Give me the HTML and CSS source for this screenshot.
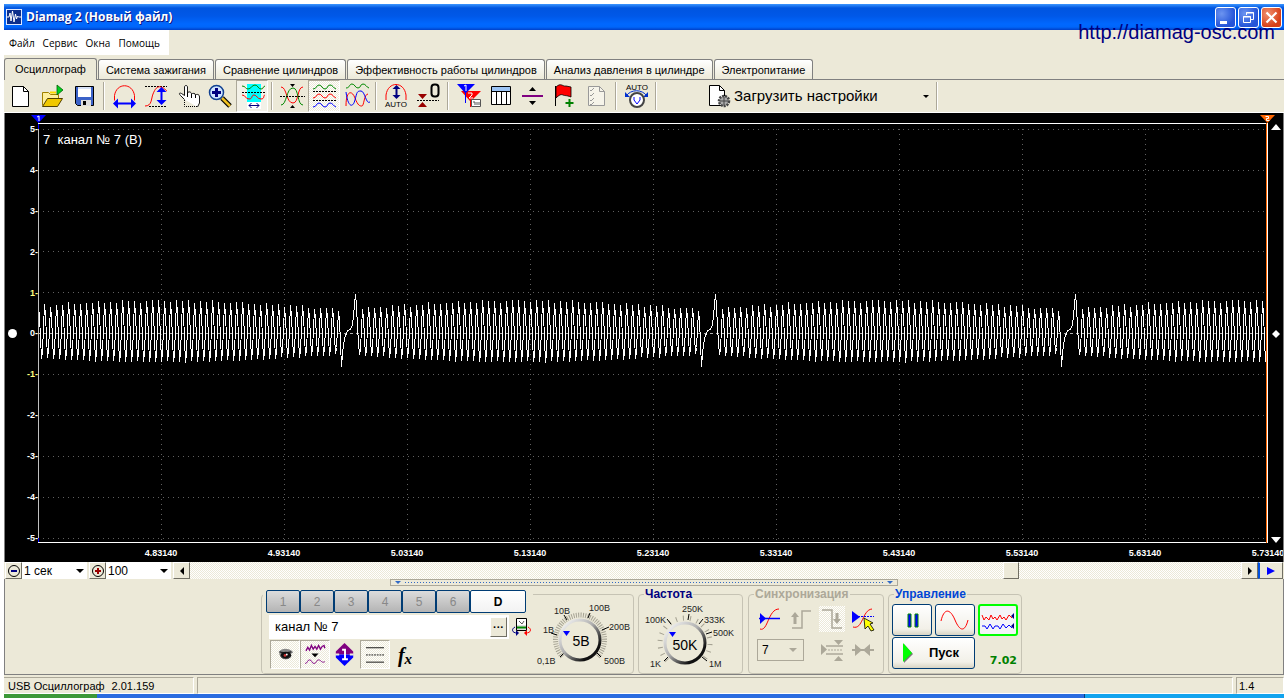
FILE: index.html
```
<!DOCTYPE html>
<html lang="ru">
<head>
<meta charset="utf-8">
<title>Diamag 2 (Новый файл)</title>
<link rel="stylesheet" href="styles.css">
</head>
<body>
<div class="window">
  <header class="titlebar">
    <svg class="app-icon" width="16" height="16" viewBox="0 0 16 16"><rect width="16" height="16" fill="#dfe8ff"/><rect x="1" y="1" width="14" height="14" fill="#0c2f8c"/><path d="M1 8h2l1-4 1 8 1.500-10 1.500 11 1.500-8 1 5 1-3 1 1h3" fill="none" stroke="#fff"/></svg>
    <h1 class="title">Diamag 2 (Новый файл)</h1>
    <button class="win-btn" aria-label="Свернуть"><svg width="19" height="19" viewBox="0 0 19 19"><path d="M4 13h7v3H4z" fill="#fff"/></svg></button>
    <button class="win-btn" aria-label="Восстановить"><svg width="19" height="19" viewBox="0 0 19 19"><path d="M7.500 7V4.500h7v7H12M7 5h8M4.500 8.500h7v6h-7zM4 9h8" fill="none" stroke="#fff"/></svg></button>
    <button class="win-btn win-close" aria-label="Закрыть"><svg width="19" height="19" viewBox="0 0 19 19"><path d="M4.500 4.500l10 10M14.500 4.500l-10 10" stroke="#fff" stroke-width="2.200"/></svg></button>
    <a class="site" href="#">http://diamag-osc.com</a>
  </header>

  <nav class="menubar">
    <button>Файл</button><button>Сервис</button><button>Окна</button><button>Помощь</button>
  </nav>

  <div class="tabs" role="tablist">
    <button class="tab active" role="tab" aria-selected="true">Осциллограф</button>
    <button class="tab" role="tab">Система зажигания</button>
    <button class="tab" role="tab">Сравнение цилиндров</button>
    <button class="tab" role="tab">Эффективность работы цилиндров</button>
    <button class="tab" role="tab">Анализ давления в цилиндре</button>
    <button class="tab" role="tab">Электропитание</button>
  </div>

  <div class="toolbar">
    <button class="tool" aria-label="Новый"><svg viewBox="0 0 32 32"><path d="M8.500 6.500h11l5 5v15h-16z" fill="#fff" stroke="#000"/><path d="M19.500 6.500v5h5" fill="none" stroke="#000"/></svg></button>
    <button class="tool" aria-label="Открыть"><svg viewBox="0 0 32 32"><path d="M6.500 25.500v-13h6l2 2h8v5" fill="#ffef9c" stroke="#a08000"/><path d="M6.500 26.500l5-8h15l-5 8z" fill="#f0c800" stroke="#504000"/><path d="M14 12.500h6" fill="none" stroke="#ffd800" stroke-width="2"/><path d="M21 5l6 5-6 5z" fill="#00d020" stroke="#006000" stroke-width=".8"/></svg></button>
    <button class="tool" aria-label="Сохранить"><svg viewBox="0 0 32 32"><path d="M7.500 6.500h18v19h-16l-2-2z" fill="#3b62c8" stroke="#000"/><path d="M10 7h13v10H10z" fill="#fff"/><path d="M10 8h13" stroke="#b0c4ee"/><path d="M13 20h10v6H13z" fill="#ddd"/><path d="M15 21h3v4h-3z" fill="#000"/></svg></button>
    <span class="sep"></span>
    <button class="tool" aria-label="Растянуть по горизонтали"><svg viewBox="0 0 32 32"><path d="M6.500 20.500v-5c2-13 18-13 20 0v5" fill="none" stroke="#f00"/><path d="M5 23.500l5-5v4h13v-4l5 5-5 5v-4H10v4z" fill="#00f"/></svg></button>
    <button class="tool" aria-label="Растянуть по вертикали"><svg viewBox="0 0 32 32"><path d="M5 6.500h22M9 26.500h18" stroke="#000" stroke-dasharray="2 1"/><path d="M5 26c7 0 6-7 8-12s4-8 8-7 4 3 6 4" fill="none" stroke="#f00"/><path d="M21.500 7l5 5h-4v8h4l-5 5-5-5h4v-8h-4z" fill="#00f"/></svg></button>
    <button class="tool" aria-label="Перемещение"><svg viewBox="0 0 32 32"><path d="M12.500 19.500l-4-4c-2-2-1-3 1-2l3 2V7c0-2 3-2 3 0v6c1-2 4-1 4 1 1-1 4-1 4 1 1-1 4-1 4 2v6l-2 4" fill="#fff" stroke="#000" stroke-width=".9"/><path d="M12.500 20v6.500h13" fill="none" stroke="#000" stroke-dasharray="1 1"/><path d="M15.500 13v4M19.500 14v4M23.500 15v3" stroke="#000"/></svg></button>
    <button class="tool" aria-label="Увеличить"><svg viewBox="0 0 32 32"><path d="M18 18l8 8" stroke="#000" stroke-width="5"/><path d="M18 18l8 8" stroke="#f0c020" stroke-width="2.500"/><circle cx="12.500" cy="12.500" r="7" fill="#cfe4ff" stroke="#104090" stroke-width="1.500"/><path d="M12.500 8v9M8 12.500h9" stroke="#000080" stroke-width="3"/></svg></button>
    <button class="tool pressed pale" aria-label="Интервал"><svg viewBox="0 0 32 32"><path d="M11 4h14v18H11z" fill="#0ff"/><path d="M11 22h14v7H11z" fill="#fff"/><path d="M6 6c4 0 3 3 6 3s4-4 7-4 3 4 6 4 1-2 4-3" fill="none" stroke="#080"/><path d="M6 12.500h24" stroke="#000" stroke-dasharray="2 1"/><path d="M6 15c4 0 3 4 7 4s2-4 5-4 3 4 7 4 2-4 4-4" fill="none" stroke="#f00"/><path d="M13 25.500h10M15.500 23l-2.500 2.500 2.500 2.500M20.500 23l2.500 2.500-2.500 2.500" fill="none" stroke="#000080"/></svg></button>
    <span class="sep"></span>
    <button class="tool" aria-label="Наложение"><svg viewBox="0 0 32 32"><path d="M5 7c6 0 5 16 12 16 6 0 4-16 10-16" fill="none" stroke="#f00"/><path d="M5 25c6 0 5-17 12-17 6 0 4 17 10 17" fill="none" stroke="#080"/><path d="M4 16.500h25" stroke="#000" stroke-dasharray="2 1"/><path d="M14 4h5l-2.500 3zM14 28h5l-2.500-3z" fill="#000"/></svg></button>
    <button class="tool pressed light" aria-label="Раздельно"><svg viewBox="0 0 32 32"><g fill="none"><path d="M5 9c4 0 3-4 6-4s3 4 6 4 2-4 5-4 3 3 6 4" stroke="#080"/><path d="M5 18c4 0 3-4 6-4s3 4 6 4 2-4 5-4 3 3 6 4" stroke="#f00"/><path d="M5 27c4 0 3-4 6-4s3 4 6 4 2-4 5-4 3 3 6 4" stroke="#00f"/><path d="M5 11.500h24M5 20.500h24" stroke="#000" stroke-dasharray="2 1"/></g></svg></button>
    <button class="tool" aria-label="Совместно"><svg viewBox="0 0 32 32"><g fill="none"><path d="M6 8c4 0 3-4 6-4s3 4 6 4 2-4 5-4 3 3 6 4" stroke="#080"/><path d="M6 26c0-16 6-16 9-8s5 8 7 8 2-12 6-12" stroke="#f00"/><path d="M6 12c2 16 7 16 9 8s2-9 6-9 5 14 9 11" stroke="#00f"/></g></svg></button>
    <span class="sep"></span>
    <button class="tool" aria-label="Автомасштаб"><svg viewBox="0 0 32 32"><path d="M6 20v-5C8 1 24 1 26 15v5" fill="none" stroke="#f00"/><path d="M16.500 5l4 4h-3v6h3l-4 4-4-4h3V9h-3z" fill="#000080"/><text x="5" y="27" class="icon-text">AUTO</text></svg></button>
    <button class="tool" aria-label="Установка нуля"><svg viewBox="0 0 32 32"><path d="M6 14h9l-4.500 5zM6 27h9l-4.500-5z" fill="#900"/><path d="M5 20.500h22" stroke="#000" stroke-dasharray="2 1"/><rect x="19.500" y="4.500" width="7" height="12" rx="3" fill="none" stroke="#000" stroke-width="2"/></svg></button>
    <span class="sep"></span>
    <button class="tool" aria-label="Маркеры"><svg viewBox="0 0 32 32"><path d="M9 11h20l-10 10v6h-1v-6z" fill="#f00"/><path d="M5 4h18l-9 9v10h-1V13z" fill="#00f"/><path d="M12 6l2-1v6" fill="none" stroke="#fff"/><path d="M16 13h4v2l-3 3h4" fill="none" stroke="#fff"/><path d="M19.500 19.500h9v7h-9z" fill="#fff" stroke="#555"/><path d="M21 22h2v3M25 22v3M27 22v3" stroke="#555" fill="none"/></svg></button>
    <button class="tool" aria-label="Таблица"><svg viewBox="0 0 32 32"><path d="M7.500 6.500h19v18h-19z" fill="#fff" stroke="#000"/><path d="M8 7h18v4H8z" fill="#9cc4f4"/><path d="M7 11.500h20M12.500 11v13M17.500 11v13M22.500 11v13" stroke="#000"/></svg></button>
    <button class="tool" aria-label="Разделитель"><svg viewBox="0 0 32 32"><path d="M6 16h21" stroke="#800080" stroke-width="2"/><path d="M13 11h7l-3.500-4zM13 21h7l-3.500 4z" fill="#000"/></svg></button>
    <button class="tool" aria-label="Добавить флажок"><svg viewBox="0 0 32 32"><path d="M7.500 6v20" stroke="#000"/><path d="M8 7c5-5 7 0 10-1l5 1v10c-5-2-6-1-8-2s-4 0-7 3z" fill="#f00" stroke="#000" stroke-width=".8"/><path d="M21.500 19v8M17.500 23h8" stroke="#008000" stroke-width="2"/></svg></button>
    <button class="tool" aria-label="Отчёт" disabled><svg viewBox="0 0 32 32"><path d="M8.500 6.500h11l5 5v14h-16z" fill="#f6f4ea" stroke="#999"/><path d="M19.500 6.500v5h5" fill="none" stroke="#999"/><path d="M10 10l1 1 3-3M10 15l1 1 3-3M10 20l1 1 3-3M10 24l1 1 3-3" fill="none" stroke="#999"/></svg></button>
    <span class="sep"></span>
    <button class="tool" aria-label="Авто напряжение"><svg viewBox="0 0 32 32"><text x="6" y="10" class="icon-text">AUTO</text><path d="M6 16c5-7 16-7 21 0" fill="none" stroke="#0030d0"/><path d="M5 12v5h5zM28 12v5h-5z" fill="#0030d0"/><circle cx="17" cy="20" r="7" fill="#fff" stroke="#444" stroke-width="2"/><path d="M14 17v3l3 4 3-4v-3" fill="none" stroke="#00f"/></svg></button>
    <span class="sep"></span>
    <button class="load"><svg width="24" height="26" viewBox="0 0 24 26"><path d="M1.500 2.500h10l5 5v15h-15z" fill="#fff" stroke="#000"/><path d="M11.500 2.500v5h5" fill="none" stroke="#000"/><circle cx="16" cy="18" r="5" fill="#aaa" stroke="#444" stroke-width="2.500" stroke-dasharray="2 1"/><path d="M12 18h8M16 14v8" stroke="#444"/></svg><span>Загрузить настройки</span><i class="caret"></i></button>
    <span class="sep"></span>
  </div>

  <main class="scope">
    <div class="markers">
      <svg class="marker" width="15" height="8" viewBox="0 0 15 8"><path d="M0 0h15L7.500 8z" fill="#00f"/><path d="M6 2l2-1v5" fill="none" stroke="#fff"/></svg>
      <svg class="marker" width="15" height="8" viewBox="0 0 15 8"><path d="M0 0h15L7.500 8z" fill="#f60"/><path d="M5.500 1.500h3v2h-2v2h3" fill="none" stroke="#fff"/></svg>
    </div>
    <div class="axis-y">
      <span>5-</span><span>4-</span><span>3-</span><span>2-</span><span class="yellow">1-</span><span>0-</span><span class="yellow">-1-</span><span>-2-</span><span>-3-</span><span>-4-</span><span>-5-</span>
      <i class="zero-dot"></i>
    </div>
    <div class="plot">
      <svg class="plot-svg" viewBox="0 0 1230 420" preserveAspectRatio="none">
        <g class="grid">
          <path d="M0 6.500H1230M0 47.500H1230M0 88.500H1230M0 128.500H1230M0 169.500H1230M0 251.500H1230M0 292.500H1230M0 333.500H1230M0 374.500H1230M0 415.500H1230"/>
          <path d="M123.500 6V420M246.500 6V420M369.500 6V420M492.500 6V420M615.500 6V420M738.500 6V420M861.500 6V420M984.500 6V420M1107.500 6V420"/>
        </g>
        <path class="zero" d="M0 210.500H1230"/>
        <path class="wave" id="wave"/>
        <path d="M.5 0V420" stroke="#c0c0c0"/><path d="M.5 0V6M.5 415V420" stroke="#00f"/>
        <path d="M0 .5H1230M0 419.500H1230" stroke="#fff"/>
        <path d="M1228.500 0V420" stroke="#f60"/><path d="M1229.500 0V420" stroke="#fff"/>
      </svg>
      <span class="channel-label">7&nbsp; канал № 7 (В)</span>
    </div>
    <div class="handles">
      <svg width="10" height="6" viewBox="0 0 10 6"><path d="M0 6h10L5 0z" fill="#fff"/></svg>
      <svg width="8" height="8" viewBox="0 0 8 8"><path d="M4 0l4 4-4 4-4-4z" fill="#fff"/></svg>
      <svg width="10" height="6" viewBox="0 0 10 6"><path d="M0 0h10L5 6z" fill="#fff"/></svg>
    </div>
    <div class="axis-x">
      <span>4.83140</span><span>4.93140</span><span>5.03140</span><span>5.13140</span><span>5.23140</span><span>5.33140</span><span>5.43140</span><span>5.53140</span><span>5.63140</span><span>5.73140</span>
    </div>
  </main>

  <div class="timebar">
    <button class="small-btn" aria-label="Уменьшить"><svg width="14" height="14" viewBox="0 0 14 14"><circle cx="7" cy="7" r="5.500" fill="none" stroke="#000"/><path d="M4 7h6" stroke="#000080" stroke-width="2"/></svg></button>
    <label class="combo"><select aria-label="Развёртка"><option>1 сек</option></select><i class="caret"></i></label>
    <button class="small-btn" aria-label="Увеличить масштаб"><svg width="14" height="14" viewBox="0 0 14 14"><circle cx="7" cy="7" r="5.500" fill="none" stroke="#000"/><path d="M4 7h6M7 4v6" stroke="#900" stroke-width="2"/></svg></button>
    <label class="combo"><select aria-label="Масштаб"><option>100</option></select><i class="caret"></i></label>
    <button class="small-btn" aria-label="Назад"><svg width="8" height="8" viewBox="0 0 8 8"><path d="M6 0v8L2 4z"/></svg></button>
    <div class="track"><i class="before"></i><button class="thumb" aria-label="Позиция"></button><i class="after"></i></div>
    <button class="small-btn" aria-label="Вперёд"><svg width="8" height="8" viewBox="0 0 8 8"><path d="M2 0v8l4-4z"/></svg></button>
    <button class="small-btn play" aria-label="Прокрутка"><svg width="8" height="8" viewBox="0 0 8 8"><path d="M0 0v8l8-4z" fill="#00f"/></svg></button>
  </div>

  <section class="panel">
    <div class="splitter"><i></i><span></span><i></i></div>
    <div class="groups">
      <fieldset class="group channels">
        <div class="channel-box">
          <div class="channel-tabs"><button disabled>1</button><button disabled>2</button><button disabled>3</button><button disabled>4</button><button disabled>5</button><button disabled>6</button><button class="current">D</button></div>
          <div class="name-row">
            <div class="name-field"><input type="text" value="канал № 7" aria-label="Имя канала"><button class="more" aria-label="Выбрать">···</button></div>
            <svg width="20" height="20" viewBox="0 0 20 20"><path d="M4.500 1.500h10v12h-10z" fill="#ddd" stroke="#000"/><path d="M5 2h9v6H5z" fill="#fff"/><path d="M5 10.500h9" stroke="#080" stroke-width="2"/><path d="M7 4l3 3 2-3" fill="none" stroke="#555"/><path d="M3 10c-4 2-3 6 2 6" fill="none" stroke="#000080"/><path d="M4 13l3 3-3 3z" fill="#000080"/><path d="M16 10c4 2 3 6-2 6" fill="none" stroke="#f00"/><path d="M15 13l-3 3 3 3z" fill="#f00"/></svg>
          </div>
          <div class="channel-tools">
            <button class="pressed light" aria-label="Видимость"><svg viewBox="0 0 30 30"><path d="M8 12c4-5 10-4 15-1l1 2-4 2H10z" fill="#888"/><path d="M9 12c3 2 8 1 13 0" stroke="#222" stroke-width="1.500" fill="none"/><ellipse cx="16" cy="16" rx="6" ry="4" fill="#111"/><path d="M9 14l2 4c4 3 8 2 10-1" fill="none" stroke="#555"/><circle cx="15" cy="16" r="1.500" fill="#c33"/><circle cx="17" cy="15" r="1" fill="#fff"/></svg></button>
            <button class="pressed light" aria-label="Сглаживание"><svg viewBox="0 0 30 30"><path d="M5 11l2-4 2 3 2-5 2 4 2-3 2 3 2-4 2 4 2-3 2-1 1 3" fill="none" stroke="#800080" stroke-width="1.500"/><path d="M11 14h8l-4 4z" fill="#000"/><path d="M4 25c3 0 2-4 5-4s2 4 5 4 2-4 5-4 3 4 7 2" fill="none" stroke="#800080"/></svg></button>
            <button aria-label="Смещение"><svg viewBox="0 0 30 30"><path d="M14.500 3l9 9v3h-18v-3z" fill="#800080"/><path d="M14.500 27l9-9v-3h-18v3z" fill="#00f"/><path d="M12 10h3v10M12 20h6" stroke="#fff" stroke-width="2" fill="none"/><path d="M5 15h4M20 15h4" stroke="#ece9d8" stroke-width="2"/></svg></button>
            <button class="pressed light" aria-label="Фильтр"><svg viewBox="0 0 30 30"><path d="M5 7.500h20M5 23.500h20" stroke="#000"/><path d="M5 15.500h20" stroke="#000" stroke-dasharray="2 1"/></svg></button>
            <button class="fx" aria-label="Функция"><span>f</span><sub>x</sub></button>
          </div>
        </div>
        <svg class="dial" width="100" height="78" viewBox="0 0 100 78">
          <defs><linearGradient id="rim" x1="0" y1="0" x2="1" y2="1"><stop offset="0" stop-color="#fff"/><stop offset=".45" stop-color="#b0b0b0"/><stop offset=".8" stop-color="#111"/></linearGradient></defs>
          <path d="M29.400 61.600A24.500 24.500 0 1 1 64.600 61.600" fill="none" stroke="#a5a293" stroke-width="5" stroke-dasharray="1 1.300"/>
          <path d="M31 58l-4 4M24 40l-6-2M34 25l-3-5M55 23l2-5M69 35l7-3M64 58l4 4" stroke="#000"/>
          <circle cx="47" cy="45" r="20" fill="#ece9d8" stroke="url(#rim)" stroke-width="3"/>
          <path d="M30 36h7l-3.500 5z" fill="#00f"/>
          <text x="48" y="51" class="dial-value">5В</text>
          <g class="dial-text"><text x="21" y="19">10В</text><text x="56" y="16">100В</text><text x="10" y="38">1В</text><text x="76" y="35">200В</text><text x="4" y="69">0,1В</text><text x="71" y="69">500В</text></g>
        </svg>
      </fieldset>
      <fieldset class="group freq">
        <legend>Частота</legend>
        <svg class="dial" width="100" height="78" viewBox="0 0 100 78">
          <path d="M28 65.400A25 25 0 1 1 64 65.400" fill="none" stroke="#a5a293" stroke-width="5" stroke-dasharray="1 6"/>
          <path d="M29 62l-4 4M32 29l-4-5M49 25l1-6M60 29l4-5M67 39l6-2M63 62l5 4" stroke="#000"/>
          <circle cx="46" cy="48" r="20" fill="#ece9d8" stroke="url(#rim)" stroke-width="3"/>
          <path d="M30 37h7l-3.500 5z" fill="#00f"/>
          <text x="46" y="55" class="dial-value">50K</text>
          <g class="dial-text"><text x="6" y="28">100K</text><text x="43" y="17">250K</text><text x="65" y="28">333K</text><text x="74" y="41">500K</text><text x="11" y="72">1K</text><text x="70" y="72">1M</text></g>
        </svg>
      </fieldset>
      <fieldset class="group sync">
        <legend>Синхронизация</legend>
        <div class="sync-grid">
          <button aria-label="Уровень"><svg viewBox="0 0 26 26"><path d="M3 23c8 3 8-20 19-20" fill="none" stroke="#f00"/><path d="M2 12.500h21" stroke="#00f" stroke-width="1.500"/><path d="M3 7v11l6-5.500z" fill="#00f"/></svg></button>
          <button aria-label="Фронт" disabled><svg viewBox="0 0 26 26"><path d="M4 22h10V5h9" fill="none" stroke="#aca899" stroke-width="1.500"/><path d="M3 11l4-5 4 5H8.500v7h-3v-7z" fill="#aca899"/></svg></button>
          <button class="light" aria-label="Спад" disabled><svg viewBox="0 0 26 26"><path d="M3 4h10v18h10" fill="none" stroke="#aca899" stroke-width="1.500"/><path d="M14 13l4 5 4-5h-2.500V7h-3v6z" fill="#aca899"/></svg></button>
          <button aria-label="Выбор уровня"><svg viewBox="0 0 26 26"><path d="M3 21c10 3 9-17 19-18" fill="none" stroke="#f00"/><path d="M2 10.500h22" stroke="#00f" stroke-dasharray="2 1"/><path d="M2 5v12l8-6z" fill="#00f"/><path d="M14 12l9 5-3 1 4 6-3 1-3-5-3 3z" fill="#ff0" stroke="#000" stroke-width=".8"/></svg></button>
          <label class="sync-select"><select aria-label="Канал синхронизации"><option>7</option></select><i class="caret"></i></label>
          <button aria-label="Порог" disabled><svg viewBox="0 0 26 26"><path d="M2 7v11l6-5.500zM15 3h9l-4.500 5zM15 24h9l-4.500-5z" fill="#aca899"/><path d="M7 9h17M7 17h17" stroke="#aca899" stroke-width="1.500"/><path d="M9 13h15" stroke="#aca899" stroke-dasharray="2 1"/></svg></button>
          <button aria-label="Задержка" disabled><svg viewBox="0 0 26 26"><path d="M5 7l7 6-7 6zM20 7l-7 6 7 6z" fill="#aca899"/><path d="M2 13h22" stroke="#aca899" stroke-width="2"/></svg></button>
        </div>
      </fieldset>
      <fieldset class="group control">
        <legend>Управление</legend>
        <div class="control-grid">
          <button class="xp" aria-label="Пауза"><svg width="30" height="28" viewBox="0 0 30 28"><path d="M11 8h3v13h-3zM18 8h3v13h-3z" fill="#00f" stroke="#080"/></svg></button>
          <button class="xp" aria-label="Один сигнал"><svg width="30" height="28" viewBox="0 0 30 28"><path d="M1 15C4 2 10 2 15 14s10 12 13 0" fill="none" stroke="#f00"/></svg></button>
          <button class="xp selected" aria-label="Запись"><svg width="34" height="28" viewBox="0 0 34 28"><path d="M1 9l2 5 2-3 3 3 2-5 2 4 2-2 2 3 3-5 2 4 2-2 2 3 3-5 3 3" fill="none" stroke="#f00"/><path d="M1 20h3l2 3 3-5 3 5 2-3h3l2 3 3-5 3 4 3-3 3 3" fill="none" stroke="#00f"/><path d="M33 7v6l-3-3zM33 17v6l-3-3z" fill="#000080"/></svg></button>
          <button class="xp start"><svg width="12" height="20" viewBox="0 0 12 20"><path d="M2 1v19l9-9z" fill="#777"/><path d="M1 0v19l9-9z" fill="#0f0"/></svg><span>Пуск</span></button>
          <output class="counter">7.02</output>
        </div>
      </fieldset>
    </div>
  </section>

  <footer class="status"><div class="cell first"><span>USB Осциллограф</span><span>2.01.159</span></div><div class="cell wide"></div><div class="cell last">1.4</div></footer>
  <div class="taskbar"><i class="start-edge"></i><i class="mid-edge"></i><i class="tray-edge"></i></div>
</div>
<script src="wave.js"></script>
</body>
</html>
```

FILE: styles.css
```
* { box-sizing: border-box; }
body { margin: 0; background: #fff; color: #000; font: 11px/14px "Liberation Sans", Arial, sans-serif; }
button, input, select { font: inherit; color: inherit; margin: 0; padding: 0; }
button { border: 0; background: none; }
svg { display: block; flex: none; }
.window { display: flex; flex-direction: column; min-height: 100vh; padding: 4px 4px 0; }
.window > * { background-color: #ece9d8; }

.titlebar { position: relative; display: flex; align-items: center; gap: 2px; height: 26px; padding: 0 2px; background: linear-gradient(#3c96ff 0, #0055e0 4px, #0058e8 12px, #0068ff 20px, #0066fa 23px, #0040c8 26px); }
.title { flex: 1; margin: 0 0 0 2px; color: #fff; font: bold 12px/20px "Open Sans", "Noto Sans", sans-serif; text-shadow: 1px 1px #0a1883; }
.win-btn { width: 21px; height: 21px; border: 1px solid #fff; border-radius: 3px; background: radial-gradient(at 30% 30%, #6c94f0, #2454d8 70%); }
.win-close { background: radial-gradient(at 30% 30%, #f09070, #d84018 70%); }
.site { position: absolute; right: 9px; top: 16px; color: #000080; font-size: 20px; line-height: 24px; text-decoration: none; }

.menubar { display: flex; align-items: center; height: 25px; }
.menubar button { height: 25px; padding: 0 4px; background: #fff; font: 10px/14px "Open Sans", sans-serif; }
.menubar button:first-child { padding-left: 5px; }
.menubar button:last-child { padding-right: 9px; }

.tabs { display: flex; align-items: flex-end; gap: 1px; height: 25px; border-bottom: 1px solid #808080; }
.tab { height: 20px; padding: 0 7px; border: solid #808080; border-width: 1px 1px 0; border-radius: 3px 3px 0 0; background: linear-gradient(#fff, #ece9d8); font-size: 11px; white-space: nowrap; }
.tab.active { height: 22px; margin-bottom: -1px; padding: 0 10px 1px; background: #ece9d8; }

.toolbar { display: flex; align-items: center; height: 33px; border-bottom: 1px solid #fff; }
.tool { width: 32px; height: 32px; flex: none; }
.tool svg, .channel-tools svg { width: 100%; height: 100%; }
.pressed { border: 1px solid; border-color: #aca899 #fff #fff #aca899; }
.pale { background: #f3f1e8; }
.tool.pressed svg { margin: -1px; width: 32px; height: 32px; }
.light, .track { background: repeating-conic-gradient(#fff 0 25%, #ece9d8 0 50%) 0 0 / 2px 2px; }
.sep { width: 2px; height: 28px; margin: 0 3px; border-left: 1px solid #aca899; border-right: 1px solid #fff; }
.icon-text { font-size: 8px; }
.load { display: flex; align-items: center; gap: 2px; width: 229px; margin-left: 44px; padding: 0 4px; font-size: 15px; }
.caret { width: 0; height: 0; border: 4px solid transparent; border-top-color: #000; border-bottom: 0; }
.load .caret { border-width: 3px 3px 0; margin-left: auto; }

.window > .scope { flex: 1; display: grid; grid-template: 10px minmax(200px, 1fr) 19px / 33px minmax(0, 1fr) 15px; border: solid #808080; border-width: 0 1px; background: #000; color: #fff; overflow: hidden; }
.markers { grid-column: 2; display: flex; justify-content: space-between; margin: 2px -7px 0; }
.markers, .handles { z-index: 1; }
.axis-y { grid-area: 2 / 1; position: relative; display: flex; flex-direction: column; justify-content: space-between; margin-bottom: -1px; text-align: right; font: bold 9px/12px "Liberation Sans", Arial, sans-serif; }
.yellow { color: #ffff80; }
.zero-dot { position: absolute; left: 3px; top: calc(50% - 5px); width: 9px; height: 9px; border-radius: 50%; background: #fff; }
.plot { grid-area: 2 / 2; position: relative; min-height: 0; }
.plot-svg { position: absolute; width: 100%; height: 100%; overflow: visible; shape-rendering: crispEdges; }
.grid path { stroke: #606060; stroke-dasharray: 1 4; }
.zero { stroke: #b0b0b0; stroke-dasharray: 3 3; }
.wave { fill: none; stroke: #fff; vector-effect: non-scaling-stroke; }
.channel-label { position: absolute; left: 5px; top: 9px; font-size: 13px; line-height: 16px; }
.handles { grid-area: 2 / 3; display: flex; flex-direction: column; align-items: center; justify-content: space-between; padding-left: 1px; padding-top: 1px; }
.axis-x { grid-area: 3 / 2; display: grid; grid-template-columns: repeat(10, 1fr); margin: 0 -5% 0 5%; font: bold 9px/20px "Liberation Sans", Arial, sans-serif; text-align: center; }

.timebar { display: flex; height: 17px; padding-left: 1px; padding-right: 1px; }
.small-btn, .thumb, .more { display: flex; align-items: center; justify-content: center; width: 17px; flex: none; background: #ece9d8; border: 1px solid; border-color: #fff #716f64 #716f64 #fff; }
.play { width: 25px; border-left: 2px solid #0050e0; }
.combo { display: flex; align-items: center; width: 67px; padding-right: 3px; background: #fff; border-right: 2px solid #ece9d8; }
.combo select, .sync-select select { flex: 1; min-width: 0; padding-left: 2px; appearance: none; border: 0; background: none; font-size: 12px; line-height: 16px; }
.track { flex: 1; display: flex; }
.track .before { flex: 814; }
.track .after { flex: 222; }
.thumb { width: 16px; }

.panel { border: solid #808080; border-width: 0 1px 1px; }
.splitter { display: flex; align-items: center; gap: 4px; width: 508px; max-width: 100%; height: 7px; margin: 0 auto; padding: 0 4px; border: 1px solid #aca899; }
.splitter i { border: 3px solid transparent; border-top-color: #316ac5; border-bottom: 0; }
.splitter span { flex: 1; height: 1px; background: repeating-linear-gradient(90deg, #316ac5 0 1px, transparent 1px 3px); }
.groups { display: flex; justify-content: center; gap: 4px; padding-right: 5px; }
.group { min-width: 0; margin: 2px 0 0; padding: 0; border: 1px solid #c6c3b4; border-radius: 4px; }
.group legend { margin-left: 5px; padding: 0 1px; font: bold 12px/13px "Liberation Sans", Arial, sans-serif; color: #000080; }
.channels { display: flex; width: 373px; margin-top: 8px; }
.channel-box { width: 270px; margin: -5px 0 0 1px; padding-left: 3px; background: #ece9d8; }
.channel-tabs { display: flex; }
.channel-tabs button { width: 34px; height: 23px; border: 1px solid #003c74; border-radius: 2px; background: linear-gradient(#dcdcdc, #b4b4b4); color: #888; font-size: 12px; }
.channel-tabs .current { width: 56px; background: linear-gradient(#fff, #f2f2f2); color: #000; font-weight: bold; }
.name-row { display: flex; align-items: center; gap: 3px; margin: 2px 0 1px 3px; }
.name-field { display: flex; width: 240px; height: 24px; padding: 2px; background: #fff; }
.name-field input { flex: 1; min-width: 0; padding-left: 4px; border: 0; background: none; font-size: 13px; }
.more { font-weight: bold; }
.channel-tools { display: flex; margin-left: 4px; }
.channel-tools button { width: 30px; height: 29px; }
.fx { font: italic bold 20px/20px "Liberation Serif", serif; }
.fx sub { font-size: 15px; line-height: 0; vertical-align: -2px; }
.dial { font-family: "Liberation Sans", Arial, sans-serif; }
.dial-text { font-size: 9px; fill: #222; }
.dial-value { font-size: 14px; text-anchor: middle; }
.freq { width: 105px; }
.freq .dial { margin-top: -6px; }
.sync { width: 136px; margin-left: 1px; }
.sync legend { color: #aca899; }
.sync-grid { display: grid; grid-template-columns: repeat(4, 26px); gap: 5px; padding: 5px 8px 4px; }
.sync-grid button { width: 26px; height: 26px; }
.sync-select { grid-column: span 2; display: flex; align-items: center; width: 47px; height: 22px; margin-top: 2px; padding-right: 6px; border: 1px solid #aca899; }
.sync-select .caret { border-top-color: #aca899; }
.sync-select select { padding-left: 4px; }
.control { width: 134px; }
.control legend { color: #0046d5; }
.control-grid { display: grid; grid-template-columns: repeat(3, 40px); gap: 1px 3px; padding: 3px 3px 2px; }
.xp { display: flex; align-items: center; justify-content: center; height: 32px; border: 1px solid #003c74; border-radius: 3px; background: linear-gradient(#fff, #f2f0e8 80%, #d8d4c4); }
.xp.selected { border: 2px solid #0f0; background: #f4f4f8; }
.start { grid-column: span 2; justify-content: flex-start; padding-left: 9px; font: bold 13px/16px "Liberation Sans", Arial, sans-serif; }
.start span { margin: 0 auto; }
.counter { align-self: end; justify-self: end; padding: 0 1px 1px 0; color: #008000; font: bold 11px/14px "DejaVu Sans", sans-serif; }

.status { display: flex; gap: 3px; height: 19px; padding-top: 2px; }
.cell { padding: 1px 3px; border: 1px solid; border-color: #aca899 #fff #fff #aca899; white-space: nowrap; }
.first { display: flex; gap: 7px; width: 190px; border-left: 0; padding-left: 4px; }
.wide { flex: 1; }
.last { width: 48px; padding-left: 2px; }
.taskbar { display: flex; height: 4px; }
.start-edge { width: 93px; background: #3c9838; }
.mid-edge { flex: 1; background: #2a6ce0; }
.tray-edge { width: 200px; border-left: 1px solid #0a3c80; background: #12a4ee; }
```

FILE: wave.js
```
// Crankshaft signal: 60-2 teeth, one revolution every 360 units, 6 units per tooth.
(function () {
  var zero = 210, rev = 360, points = [];
  function add(x, y) {
    if (x >= 0 && x <= 1227) points.push((x + 0.5).toFixed(1) + ' ' + (zero - y).toFixed(1));
  }
  for (var start = -43; start < 1230; start += rev) {
    for (var t = 0; t < 57; t++) {
      var x = start + 4 + t * 6;
      var swell = Math.sin(Math.PI * (t + 3) / 60);
      var ripple = Math.sin(t * 1.3) + Math.sin(t * 2.9);
      var low = 21 + 8 * swell + ripple / 2;
      var high = 23 + 9 * swell + ripple;
      add(x, -low);
      add(x + 1, -low * 0.7);
      add(x + 3, high);
      add(x + 4, high * 0.6);
    }
    add(start + 346, -34);
    add(start + 347, -20);
    add(start + 349, -5);
    add(start + 352, 2);
    add(start + 355, 4);
    add(start + 357, 8);
    add(start + 359, 28);
    add(start + 360, 39);
    add(start + 361, 28);
    add(start + 362, 5);
  }
  document.getElementById('wave').setAttribute('d', 'M' + points.join('L'));
})();
```
